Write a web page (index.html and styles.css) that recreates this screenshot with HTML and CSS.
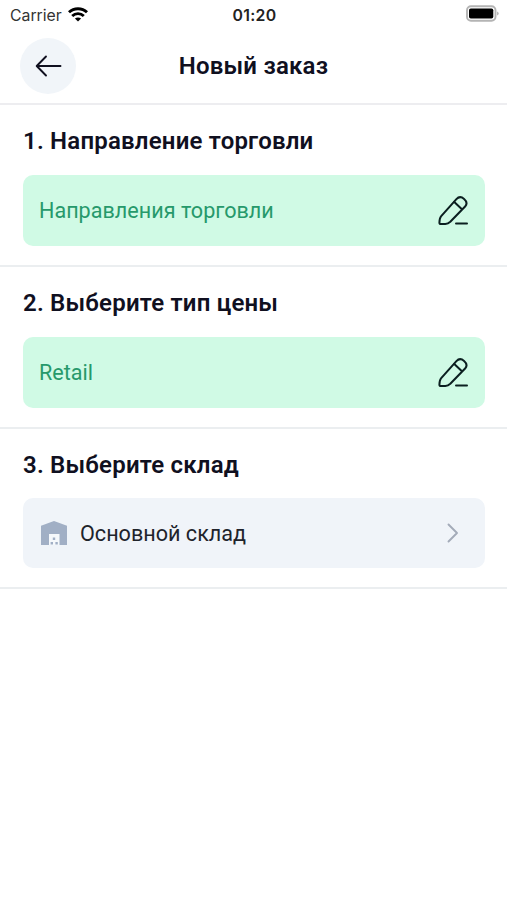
FILE: index.html
```html
<!DOCTYPE html>
<html lang="ru">
<head>
    <meta charset="UTF-8">
    <meta name="viewport" content="width=device-width, initial-scale=1.0">
    <title>Новый заказ</title>
    <link rel="stylesheet" href="styles.css">
</head>
<body>
    <div class="status-bar">
        <div class="carrier">
            <span>Carrier</span>
            <svg class="wifi" width="20" height="15" viewBox="0 0 20 15" fill="none" stroke="#000" stroke-width="2.9">
                <path d="M1 5.200C6 .5 14 .5 19 5.200"/>
                <path d="M4.200 9c3.300-3.200 8.300-3.200 11.600 0"/>
                <path d="M10 14.600l-3.100-3.100c1.700-1.500 4.500-1.500 6.200 0z" fill="#000" stroke="none"/>
            </svg>
        </div>
        <span class="time">01:20</span>
        <div class="battery-wrap">
            <svg class="battery" width="33" height="18" viewBox="0 0 33 18">
                <rect x="1" y="1.200" width="28.500" height="14.600" rx="4" fill="#fff" stroke="#b4b4b4" stroke-width="1.900"/>
                <rect x="3" y="3.500" width="24.300" height="10" rx="1.800" fill="#000"/>
                <path d="M31.200 6.500v4q1.400-.5 1.400-2t-1.400-2z" fill="#aaa"/>
            </svg>
        </div>
    </div>

    <header class="header">
        <button class="back-btn" type="button" aria-label="Назад">
            <svg width="28" height="24" viewBox="0 0 28 24" fill="none" stroke="#10101f" stroke-width="1.900" stroke-linecap="round" stroke-linejoin="round">
                <path d="M26.500 12H3M12 2.500L2.700 12l9.300 9.500"/>
            </svg>
        </button>
        <h1>Новый заказ</h1>
    </header>

    <main>
        <section class="step">
            <h2>1. Направление торговли</h2>
            <div class="field field-done">
                <span>Направления торговли</span>
                <svg class="edit-icon" width="32" height="32" viewBox="0 0 32 32" fill="none" stroke="#0b1f20" stroke-width="2" stroke-linecap="round" stroke-linejoin="round">
                    <path d="M4 21.300L19.400 4.100c2.200-2.400 5.200-2.400 7.700-.2 2.600 2.300 3 5.300 1 7.600L13.300 26.800c-1.600 1.500-3 2.100-5 2.200l-4.300.1c-1.100 0-1.600-.5-1.600-1.600.1-2.600.2-4.600 1.600-6.200zM17 6.800l8.200 7.700"/>
                    <path d="M19 28.600h11"/>
                </svg>
            </div>
        </section>

        <section class="step">
            <h2>2. Выберите тип цены</h2>
            <div class="field field-done">
                <span>Retail</span>
                <svg class="edit-icon" width="32" height="32" viewBox="0 0 32 32" fill="none" stroke="#0b1f20" stroke-width="2" stroke-linecap="round" stroke-linejoin="round">
                    <path d="M4 21.300L19.400 4.100c2.200-2.400 5.200-2.400 7.700-.2 2.600 2.300 3 5.300 1 7.600L13.300 26.800c-1.600 1.500-3 2.100-5 2.200l-4.300.1c-1.100 0-1.600-.5-1.600-1.600.1-2.600.2-4.600 1.600-6.200zM17 6.800l8.200 7.700"/>
                    <path d="M19 28.600h11"/>
                </svg>
            </div>
        </section>

        <section class="step step-last">
            <h2>3. Выберите склад</h2>
            <div class="field">
                <svg class="store-icon" width="28" height="26" viewBox="0 0 28 26">
                    <path d="M1 5.700L14 1l13 4.700V25H1z" fill="#a1afc5"/>
                    <path d="M9 14h10.500v11H9z" fill="#f5f8fb"/>
                    <path d="M12.800 17.500h2.400v2.400h-2.400zM10.600 22h2.400v2.400h-2.400zM15.400 22h2.400v2.400h-2.400z" fill="#a1afc5"/>
                </svg>
                <span>Основной склад</span>
                <svg class="chevron" width="12" height="20" viewBox="0 0 12 20" fill="none" stroke="#a3abb9" stroke-width="1.900" stroke-linecap="round" stroke-linejoin="round">
                    <path d="M1.500 1.500L10 10l-8.500 8.500"/>
                </svg>
            </div>
        </section>
    </main>
</body>
</html>
```

FILE: styles.css
```css
* {
    box-sizing: border-box;
}

body {
    margin: 0;
    background-color: #fff;
    color: #10101f;
    font-family: Roboto, sans-serif;
}

.status-bar {
    display: grid;
    grid-template-columns: 1fr auto 1fr;
    align-items: center;
    height: 30px;
    padding: 0 8px 0 10px;
    font-family: Inter, sans-serif;
    font-size: 15.8px;
    color: #333;
}

.carrier {
    display: flex;
    align-items: center;
    gap: 6px;
}

.wifi {
    margin-top: -1px;
}

.time {
    font-weight: 600;
    color: #222;
    letter-spacing: 0.3px;
}

.battery-wrap {
    display: flex;
    justify-content: flex-end;
    margin-top: -2px;
}

.header {
    display: grid;
    grid-template-columns: 56px 1fr 56px;
    align-items: center;
    height: 75px;
    padding: 0 20px 1px;
    border-bottom: 2px solid #ededf0;
}

.header h1 {
    margin: 0;
    font-size: 24px;
    font-weight: 600;
    line-height: 28px;
    letter-spacing: 0.2px;
    text-align: center;
}

.back-btn {
    display: flex;
    align-items: center;
    justify-content: center;
    width: 56px;
    height: 56px;
    padding: 0;
    border: none;
    border-radius: 50%;
    background-color: #f1f5f9;
}

.step {
    height: 162px;
    padding: 22px 22px 0 23px;
    border-bottom: 2px solid #ebeef0;
}

.step-last {
    height: 160px;
}

.step h2 {
    margin: 0 0 20px;
    font-size: 24px;
    font-weight: 600;
    line-height: 28px;
    letter-spacing: 0.2px;
}

.step-last h2 {
    margin-bottom: 19px;
}

.field {
    display: flex;
    align-items: center;
    height: 70px;
    padding: 0 16px;
    border-radius: 10px;
    background-color: #f0f4f9;
    color: #20232b;
    font-size: 21.6px;
}

.field-done {
    justify-content: space-between;
    height: 71px;
    background-color: #d0fae5;
    color: #26996b;
}

.store-icon {
    margin: 0 12px 0 1px;
}

.chevron {
    margin-left: auto;
    margin-right: 10px;
}
```
